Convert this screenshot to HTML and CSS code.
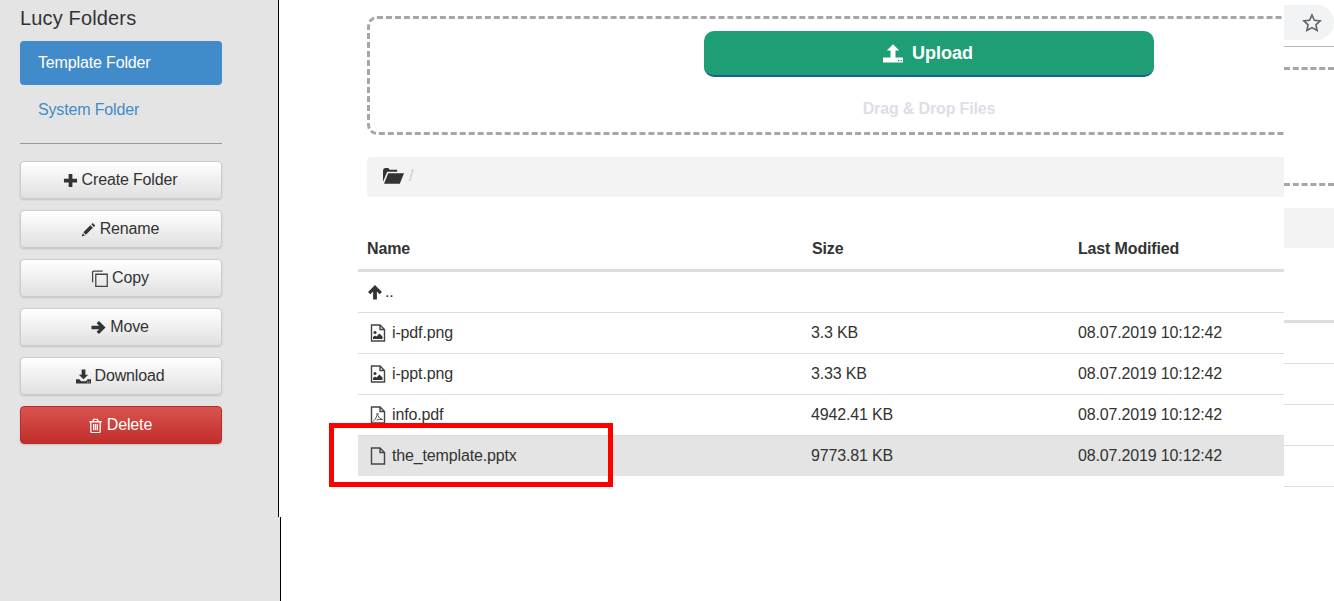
FILE: index.html
```html
<!DOCTYPE html>
<html lang="en">
<head>
    <meta charset="UTF-8">
    <title>Lucy Folders</title>
    <link rel="stylesheet" href="styles.css">
</head>
<body>
    <aside class="sidebar">
        <h4 class="sidebar-title">Lucy Folders</h4>
        <a class="pill pill-active">Template Folder</a>
        <a class="pill">System Folder</a>
        <hr class="divider">
        <button class="btn">
            <svg class="icon" viewBox="0 0 16 16"><path d="M6 1h4v5h5v4h-5v5H6v-5H1V6h5z"/></svg>
            Create Folder
        </button>
        <button class="btn">
            <svg class="icon" viewBox="0 0 16 16"><path d="M12.500 1l2.700 2.700-1.500 1.500L11 2.500zM10 3.500l2.700 2.700-7.500 7.500-2.700-2.700zM1.800 12l2.400 2.400-3.400 1z"/></svg>
            Rename
        </button>
        <button class="btn">
            <svg class="icon icon-copy" viewBox="0 0 16 16"><path d="M1.500 11.500V2q0-1 1-1h8.500"/><path d="M4.500 4h10.800v11.500H4.500z"/></svg>
            Copy
        </button>
        <button class="btn">
            <svg class="icon" viewBox="0 0 16 16"><path d="M8.500 1L15.500 8l-7 7L6 12.500l2.700-2.600H0.500V6.100h8.200L6 3.500z"/></svg>
            Move
        </button>
        <button class="btn">
            <svg class="icon" viewBox="0 0 16 16"><path d="M6 0.500h4v5.500h3l-5 5-5-5h3z"/><path fill-rule="evenodd" d="M0 11h3.500l2 2h5l2-2H16v4.500H0zM12 13.300v1h1v-1zM14 13.300v1h1v-1z"/></svg>
            Download
        </button>
        <button class="btn btn-danger">
            <svg class="icon icon-trash" viewBox="0 0 16 16"><path d="M1.500 4h13M5 4l1-2.500h4L11 4M3 4v10q0 1.500 1.500 1.500h7q1.500 0 1.500-1.500V4M6 6.500v6.500M8 6.500v6.500M10 6.500v6.500"/></svg>
            Delete
        </button>
    </aside>

    <main class="content">
        <div class="dropzone">
            <button class="btn-upload">
                <svg class="icon-upload" viewBox="0 0 16 16"><path fill-rule="evenodd" d="M8 1l5 5h-3v5.500h6v4H0v-4h6V6H3zM12 13.500v1h1v-1zM14 13.500v1h1v-1z"/></svg>
                Upload
            </button>
            <div class="dropzone-hint">Drag &amp; Drop Files</div>
        </div>

        <div class="breadcrumb">
            <svg class="icon-folder" viewBox="0 1 20 16"><path d="M0 14V3.500Q0 1 2 1h3l1.500 1.500h7V4.500H4L0 14z"/><path d="M5 6h15l-4 10H1z"/></svg>
            <span class="crumb-sep">/</span>
        </div>

        <table class="files">
            <thead>
                <tr>
                    <th class="col-name">Name</th>
                    <th class="col-size">Size</th>
                    <th>Last Modified</th>
                </tr>
            </thead>
            <tbody>
                <tr>
                    <td><div class="file-up"><svg class="icon-up" viewBox="0 0 16 16"><path d="M8 1l7 7-2.400 2.300-2.700-2.700V15.500H6.100V7.600l-2.700 2.700L1 8z"/></svg>..</div></td>
                    <td></td>
                    <td></td>
                </tr>
                <tr>
                    <td><div class="file"><svg class="icon-file" viewBox="0 0 16 18"><path class="page" d="M1.500 1h8.500l4.500 4.500V17h-13zM10 1v4.500h4.500"/><circle cx="5" cy="8.500" r="1.500"/><path d="M3 15v-2l2-1.500 1.500 1 3-3 3 3V15z"/></svg>i-pdf.png</div></td>
                    <td>3.3 KB</td>
                    <td>08.07.2019 10:12:42</td>
                </tr>
                <tr>
                    <td><div class="file"><svg class="icon-file" viewBox="0 0 16 18"><path class="page" d="M1.500 1h8.500l4.500 4.500V17h-13zM10 1v4.500h4.500"/><circle cx="5" cy="8.500" r="1.500"/><path d="M3 15v-2l2-1.500 1.500 1 3-3 3 3V15z"/></svg>i-ppt.png</div></td>
                    <td>3.33 KB</td>
                    <td>08.07.2019 10:12:42</td>
                </tr>
                <tr>
                    <td><div class="file"><svg class="icon-file" viewBox="0 0 16 18"><path class="page" d="M1.500 1h8.500l4.500 4.500V17h-13zM10 1v4.500h4.500"/><path class="page page-thin" d="M3 15.500q2.500-1.500 4-6 -0.500-2.500 0.500-2.500t0.300 2.500q1 3 4.700 4 -3.500-0.500-6 0.500"/></svg>info.pdf</div></td>
                    <td>4942.41 KB</td>
                    <td>08.07.2019 10:12:42</td>
                </tr>
                <tr class="row-selected">
                    <td><div class="file"><svg class="icon-file" viewBox="0 0 16 18"><path class="page" d="M1.500 1h8.500l4.500 4.500V17h-13zM10 1v4.500h4.500"/></svg>the_template.pptx</div></td>
                    <td>9773.81 KB</td>
                    <td>08.07.2019 10:12:42</td>
                </tr>
            </tbody>
        </table>
    </main>

    <!-- the other window showing behind on the right -->
    <div class="behind">
        <div class="bookmark">
            <svg class="icon-star" viewBox="0 0 20 20"><path d="M10 2l2.400 5.300 5.800 0.600-4.300 3.900 1.200 5.700L10 14.600l-5.100 2.900 1.200-5.700L1.800 7.900l5.800-0.600z"/></svg>
        </div>
        <div class="behind-line"></div>
        <div class="behind-dash behind-dash-top"></div>
        <div class="behind-dash behind-dash-bottom"></div>
        <div class="behind-crumb"></div>
        <div class="behind-thick"></div>
        <div class="behind-row"></div>
        <div class="behind-row"></div>
        <div class="behind-row"></div>
        <div class="behind-row"></div>
    </div>

    <div class="highlight"></div>
</body>
</html>
```

FILE: styles.css
```css
* {
    margin: 0;
    padding: 0;
    box-sizing: border-box;
}

body {
    font-family: 'Liberation Sans', Arial, sans-serif;
    font-size: 16px;
    letter-spacing: -0.15px;
    color: #333;
    background: #fff;
    height: 100vh;
    overflow: hidden;
    position: relative;
    display: flex;
}

/* sidebar */
.sidebar {
    width: 281px;
    flex: none;
    height: 100%;
    background: #e4e4e4;
    border-right: 1px solid #000;
    padding: 6px 58px 0 20px;
    display: flex;
    flex-direction: column;
}

.sidebar-title {
    font-size: 20px;
    font-weight: normal;
    letter-spacing: 0.15px;
    line-height: 24px;
    margin-bottom: 11px;
}

.pill {
    display: block;
    height: 44px;
    line-height: 44px;
    padding-left: 18px;
    margin-bottom: 3px;
    border-radius: 4px;
    color: #428bca;
}

.pill-active {
    background: #428bca;
    color: #fff;
}

.divider {
    border: none;
    border-top: 1px solid #999;
    margin: 8px 0 17px;
}

.btn {
    height: 38px;
    margin-bottom: 11px;
    padding-right: 2px;
    border: 1px solid #ccc;
    border-radius: 4px;
    background: linear-gradient(to bottom, #fff, #e0e0e0);
    box-shadow: 0 1px 2px rgba(0,0,0,0.15);
    color: #333;
    font: inherit;
    letter-spacing: inherit;
    display: flex;
    justify-content: center;
    align-items: center;
    gap: 4px;
}

.btn-danger {
    border-color: #b92c28;
    background: linear-gradient(to bottom, #d9534f, #c12e2a);
    color: #fff;
}

.icon {
    width: 15px;
    height: 15px;
    fill: currentColor;
}

.icon-copy {
    width: 17px;
    height: 17px;
    fill: none;
    stroke: #444;
    stroke-width: 1.2;
}

.icon-trash {
    fill: none;
    stroke: currentColor;
    stroke-width: 1.4;
}

/* main area */
.content {
    width: 1006px;
    height: 517px;
    flex: none;
    margin-left: -3px;
    background: #fff;
    border-left: 1px solid #000;
    padding-top: 16px;
    overflow: hidden;
    position: relative;
}

.dropzone {
    width: 1124px;
    height: 119px;
    margin-left: 88px;
    border: 3px dashed #a6a6a6;
    border-radius: 10px;
    padding-top: 12px;
    display: flex;
    flex-direction: column;
    align-items: center;
}

.btn-upload {
    width: 450px;
    height: 46px;
    flex: none;
    padding-right: 2px;
    border: none;
    border-bottom: 2px solid #17608f;
    border-radius: 10px;
    background: #1e9e75;
    color: #fff;
    font: bold 18px 'Liberation Sans', Arial, sans-serif;
    letter-spacing: 0;
    display: flex;
    justify-content: center;
    align-items: center;
    gap: 9px;
}

.icon-upload {
    width: 20px;
    height: 20px;
    fill: #fff;
}

.dropzone-hint {
    margin-top: 23px;
    font-weight: bold;
    line-height: 18px;
    color: #dddee6;
}

.breadcrumb {
    width: 1124px;
    height: 40px;
    margin: 22px 0 33px 88px;
    padding: 0 0 2px 16px;
    background: #f3f3f3;
    border-radius: 4px;
    display: flex;
    align-items: center;
    gap: 5px;
}

.icon-folder {
    width: 21px;
    height: 17px;
    fill: #333;
}

.crumb-sep {
    color: #ccc;
}

/* file table */
.files {
    width: 1133px;
    margin-left: 79px;
    border-collapse: separate;
    border-spacing: 0;
    table-layout: fixed;
}

.files th {
    text-align: left;
    line-height: 24px;
    padding: 7px 9px 8px;
    border-bottom: 3px solid #ddd;
}

.col-name {
    width: 445px;
}

.col-size {
    width: 266px;
}

.files td {
    line-height: 24px;
    padding: 8px 8px 8px 9px;
    border-top: 1px solid #ddd;
}

.files td:nth-child(2) {
    padding-left: 8px;
}

.files tbody tr:first-child td {
    border-top: none;
}

.row-selected td {
    background: #e4e4e4;
}

.file,
.file-up {
    display: flex;
    align-items: center;
}

.file {
    padding-left: 3px;
    gap: 6px;
}

.file-up {
    gap: 2px;
}

.icon-up {
    width: 16px;
    height: 16px;
    fill: #333;
}

.icon-file {
    width: 16px;
    height: 18px;
    fill: #333;
}

.icon-file .page {
    fill: none;
    stroke: #444;
    stroke-width: 1.4;
}

.icon-file .page-thin {
    stroke-width: 0.9;
}

/* window behind, only its left edge shows */
.behind {
    width: 50px;
    flex: none;
    height: 100%;
    background: #fff;
    display: flex;
    flex-direction: column;
}

.bookmark {
    height: 35px;
    margin-top: 5px;
    background: #f1f3f4;
    border-radius: 0 18px 18px 0;
    padding-left: 18px;
    display: flex;
    align-items: center;
}

.icon-star {
    width: 20px;
    height: 20px;
    fill: none;
    stroke: #5f6368;
    stroke-width: 1.6;
}

.behind-line {
    height: 1px;
    margin-top: 6px;
    background: #b5b5b5;
}

.behind-dash {
    border-top: 3px dashed #a6a6a6;
}

.behind-dash-top {
    margin-top: 20px;
}

.behind-dash-bottom {
    margin-top: 113px;
}

.behind-crumb {
    height: 40px;
    margin-top: 22px;
    background: #f3f3f3;
}

.behind-thick {
    height: 3px;
    margin-top: 72px;
    background: #ddd;
}

.behind-row {
    height: 1px;
    margin-top: 40px;
    background: #ddd;
}

/* red annotation drawn over the screenshot */
.highlight {
    position: absolute;
    left: 329px;
    top: 423px;
    width: 284px;
    height: 64px;
    border: 5px solid #ff0000;
}
```
